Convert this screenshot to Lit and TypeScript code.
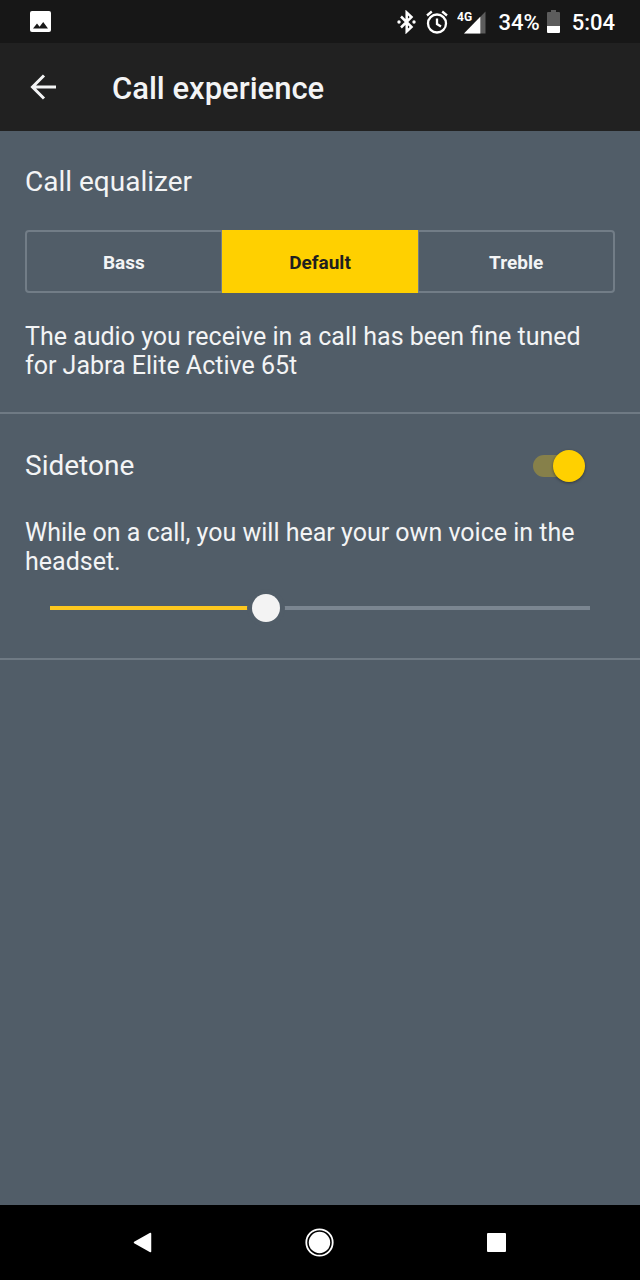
import { LitElement, html, css, svg } from "lit";
import { customElement, state } from "lit/decorators.js";
import { classMap } from "lit/directives/class-map.js";
import { styleMap } from "lit/directives/style-map.js";

const PRESETS = ["Bass", "Default", "Treble"];

@customElement("status-bar")
class StatusBar extends LitElement {
  static styles = css`
    :host {
      display: flex;
      align-items: center;
      height: 43px;
      padding: 0 25px 0 30px;
      background: #171717;
      color: #fff;
      font: 500 22px/24px Roboto, sans-serif;
    }
    svg {
      display: block;
      flex: none;
    }
    .right {
      display: flex;
      align-items: center;
      margin-left: auto;
    }
    .alarm {
      margin-left: 10px;
    }
    .signal {
      margin-left: 9px;
    }
    .network {
      font: 700 12px Roboto, sans-serif;
      fill: #fff;
    }
    .level,
    .clock {
      padding-top: 2px;
    }
    .level {
      margin-left: 12px;
    }
    .battery {
      margin-left: 7px;
    }
    .clock {
      margin-left: 12px;
    }
  `;

  render() {
    return html`
      <svg width="21" height="21" viewBox="0 0 21 21" aria-hidden="true">
        <rect width="21" height="21" rx="2" fill="#fff" />
        <path d="M3 17.5L7 12.5l2.6 3.2L13.200 11l4.800 6.500z" fill="#171717" />
      </svg>
      <div class="right">
        <svg width="20" height="24" viewBox="0 0 20 24" fill="none" stroke="#fff" aria-hidden="true">
          <path d="M5 6.500L15.500 17L10.700 21.500V2.500L15.500 7L5 17.500" stroke-width="2.500" />
          <circle cx="3" cy="12" r="1.700" fill="#fff" stroke="none" />
          <circle cx="18" cy="12" r="1.700" fill="#fff" stroke="none" />
        </svg>
        <svg class="alarm" width="22" height="24" viewBox="0 0 22 24" fill="none" stroke="#fff" stroke-width="2.300" aria-hidden="true">
          <circle cx="11" cy="13.500" r="9" />
          <path d="M11 8.500V14l4 2.400M1 5.500L5.800 1.500M21 5.500L16.200 1.500" />
        </svg>
        <svg class="signal" width="29" height="26" viewBox="0 0 29 26" aria-hidden="true">
          <path d="M28.500 2.500V24.500H7z" fill="#5c5c5c" />
          <path d="M23.300 7.700V24.500H7z" fill="#fff" />
          <path d="M0 0H15V13H0z" fill="#171717" />
          <text class="network" x="0" y="12">4G</text>
        </svg>
        <span class="level">34%</span>
        <svg class="battery" width="13" height="24" viewBox="0 0 13 24" aria-hidden="true">
          <path d="M4 0h5v2h3q1 0 1 1v13H0V3q0-1 1-1h3z" fill="#5c5c5c" />
          <path d="M0 16h13v6q0 1-1 1H1q-1 0-1-1z" fill="#fff" />
        </svg>
        <span class="clock">5:04</span>
      </div>
    `;
  }
}

@customElement("nav-bar")
class NavBar extends LitElement {
  static styles = css`
    :host {
      display: flex;
      justify-content: center;
      height: 75px;
      background: #000;
    }
    button {
      display: grid;
      place-items: center;
      width: 177px;
      padding: 0;
      border: 0;
      background: none;
    }
    svg {
      display: block;
    }
  `;

  render() {
    const key = (label: string, shape: unknown) => html`
      <button aria-label=${label}>
        <svg width="30" height="30" viewBox="0 0 30 30">${shape}</svg>
      </button>
    `;
    return html`
      ${key("Back", svg`<path d="M6.500 14.500L22.500 5.500V23.500z" fill="#fff" stroke="#fff" stroke-width="1.500" stroke-linejoin="round" />`)}
      ${key("Home", svg`
        <circle cx="14.500" cy="14.500" r="13.200" fill="none" stroke="#fff" stroke-width="1.800" />
        <circle cx="14.500" cy="14.500" r="10.700" fill="#fff" />`)}
      ${key("Overview", svg`<rect x="5" y="5" width="19" height="19" rx="1" fill="#fff" />`)}
    `;
  }
}

@customElement("app-root")
class AppRoot extends LitElement {
  @state() private preset = "Default";
  @state() private sidetone = true;
  @state() private level = 40;

  static styles = css`
    :host {
      display: flex;
      flex-direction: column;
      min-height: 100vh;
      background: #515d68;
      color: #f3f4f5;
      font: 400 25px/29px Roboto, sans-serif;
    }
    .app-bar {
      display: flex;
      align-items: center;
      gap: 56px;
      height: 88px;
      padding: 0 30px;
      background: #212121;
    }
    .back {
      padding: 0;
      border: 0;
      background: none;
    }
    .back svg {
      display: block;
    }
    h1 {
      margin: 0;
      padding-top: 3px;
      font-size: 31px;
      font-weight: 500;
      line-height: 36px;
    }
    main {
      flex: 1;
    }
    section {
      padding: 34px 25px 32px;
      border-bottom: 2px solid #6f7a84;
    }
    h2 {
      margin: 0;
      font-size: 28px;
      font-weight: 400;
      line-height: 34px;
    }
    p {
      margin: 0;
    }
    .segments {
      display: grid;
      grid-template-columns: repeat(3, 1fr);
      height: 63px;
      margin: 31px 0 29px;
    }
    .segment {
      padding: 2px 0 0;
      border: 2px solid #727d87;
      border-width: 2px 0;
      background: none;
      color: inherit;
      font: 700 19px/24px Roboto, sans-serif;
    }
    .segment:first-child {
      border-width: 2px 1px 2px 2px;
      border-radius: 4px 0 0 4px;
    }
    .segment:last-child {
      border-width: 2px 2px 2px 1px;
      border-radius: 0 4px 4px 0;
    }
    .segment.active {
      border-color: #ffd000;
      background: #ffd000;
      color: #1f1f1f;
    }
    .sidetone-head {
      display: flex;
      align-items: center;
      justify-content: space-between;
      padding-top: 1px;
      margin-bottom: 35px;
    }
    .switch {
      appearance: none;
      display: flex;
      align-items: center;
      width: 44px;
      height: 22px;
      margin: 0 38px 0 0;
      border-radius: 11px;
      background: #7e8890;
    }
    .switch::before {
      content: "";
      flex: none;
      width: 32px;
      height: 32px;
      margin: 0 -8px;
      border-radius: 50%;
      background: #f3f4f5;
      box-shadow: 0 1px 3px rgba(0, 0, 0, 0.4);
    }
    .switch:checked {
      justify-content: flex-end;
      background: #86804a;
    }
    .switch:checked::before {
      background: #ffd000;
    }
    .slider-row {
      display: flex;
      padding: 17px 11px 3px;
    }
    .slider {
      appearance: none;
      flex: 1;
      min-width: 0;
      height: 30px;
      margin: 0;
      background: linear-gradient(to right, #fdc81f var(--level), #7b8691 var(--level)) center / calc(100% - 28px) 4px no-repeat;
    }
    .slider::-webkit-slider-thumb {
      appearance: none;
      width: 28px;
      height: 28px;
      border: 0;
      border-radius: 50%;
      background: #f3f3f3;
      box-shadow: 0 0 0 5px #515d68;
    }
  `;

  render() {
    return html`
      <status-bar></status-bar>
      <header class="app-bar">
        <button class="back" aria-label="Back">
          <svg width="26" height="26" viewBox="0 0 26 26" fill="none" stroke="#f3f4f5" stroke-width="3">
            <path d="M26 13H3M14 1.500L2.500 13L14 24.500" />
          </svg>
        </button>
        <h1>Call experience</h1>
      </header>
      <main>
        <section>
          <h2>Call equalizer</h2>
          <div class="segments" role="group" aria-label="Call equalizer">
            ${PRESETS.map(
              (name) => html`
                <button
                  class=${classMap({ segment: true, active: name === this.preset })}
                  aria-pressed=${name === this.preset}
                  @click=${() => (this.preset = name)}
                >${name}</button>
              `
            )}
          </div>
          <p>The audio you receive in a call has been fine tuned for Jabra Elite Active 65t</p>
        </section>
        <section>
          <div class="sidetone-head">
            <h2><label for="sidetone">Sidetone</label></h2>
            <input
              id="sidetone"
              class="switch"
              type="checkbox"
              role="switch"
              .checked=${this.sidetone}
              @change=${(e: Event) => (this.sidetone = (e.target as HTMLInputElement).checked)}
            />
          </div>
          <p>While on a call, you will hear your own voice in the headset.</p>
          <div class="slider-row">
            <input
              class="slider"
              type="range"
              min="0"
              max="100"
              aria-label="Sidetone level"
              style=${styleMap({ "--level": `${this.level}%` })}
              .value=${String(this.level)}
              @input=${(e: Event) => (this.level = Number((e.target as HTMLInputElement).value))}
            />
          </div>
        </section>
      </main>
      <nav-bar></nav-bar>
    `;
  }
}
